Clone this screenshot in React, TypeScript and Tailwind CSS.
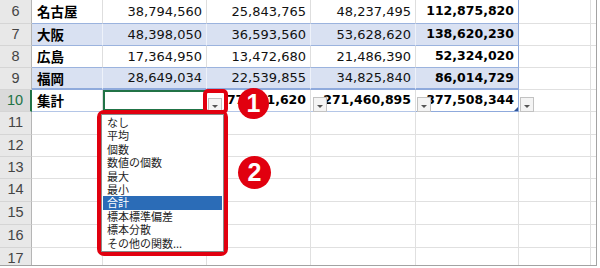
const rows = [
  { n: 6, name: '名古屋', v: ['38,794,560', '25,843,765', '48,237,495'], t: '112,875,820', band: false, h: 'h-[24px]' },
  { n: 7, name: '大阪', v: ['48,398,050', '36,593,560', '53,628,620'], t: '138,620,230', band: true, h: 'h-[22px]' },
  { n: 8, name: '広島', v: ['17,364,950', '13,472,680', '21,486,390'], t: '52,324,020', band: false, h: 'h-[22px]' },
  { n: 9, name: '福岡', v: ['28,649,034', '22,539,855', '34,825,840'], t: '86,014,729', band: true, h: 'h-[22px]' },
];

const emptyRows = [
  { n: 11, h: 'h-[23px]' },
  { n: 12, h: 'h-[22px]' },
  { n: 13, h: 'h-[22px]' },
  { n: 14, h: 'h-[23px]' },
  { n: 15, h: 'h-[23px]' },
  { n: 16, h: 'h-[23px]' },
  { n: 17, h: 'h-[22px]' },
];

const items = ['なし', '平均', '個数', '数値の個数', '最大', '最小', '合計', '標本標準偏差', '標本分散', 'その他の関数...'];

const num = "[font-family:'DejaVu_Sans',sans-serif] text-[13px] text-[#111]";
const bold = "[font-family:'DejaVu_Sans',sans-serif] text-[12.5px] font-bold text-black";
const jp = "[font-family:'Noto_Sans_CJK_JP',sans-serif]";

function RowHead({ n, active }: { n: number; active?: boolean }) {
  return (
    <div
      className={`w-[32px] shrink-0 flex items-center justify-center border-b border-b-[#d5d5d5] text-[14.5px] [font-family:'Liberation_Sans',sans-serif] ${
        active
          ? 'bg-[#dadada] text-[#217346] border-r-2 border-r-[#217346]'
          : 'bg-[#e8e8e8] text-[#444] border-r border-r-[#b5b5b5]'
      }`}
    >
      {n}
    </div>
  );
}

function DropBtn({ className }: { className: string }) {
  return (
    <div className={`absolute w-[14px] bg-[#f4f4f4] border border-[#c2c2c2] flex items-center justify-center pt-[3px] ${className}`}>
      <svg width="6" height="3" viewBox="0 0 6 3">
        <path d="M0 0h6L3 3z" fill="#555" />
      </svg>
    </div>
  );
}

export default function App() {
  return (
    <div className="w-[600px] h-[268px] bg-white overflow-hidden">
      <div className="relative w-[597px] h-[266px] border-r border-b border-[#a3a3a3] overflow-hidden">
        {rows.map((r) => {
          const bg = r.band ? 'bg-[#d9e1f2]' : 'bg-white';
          const vline = r.band ? 'border-r-[#eef2fa]' : 'border-r-[#dedede]';
          const hline = r.n === 9 ? 'border-b-2 border-b-[#8faadc]' : 'border-b border-b-[#9bb3de]';
          return (
            <div key={r.n} className={`flex ${r.h}`}>
              <RowHead n={r.n} />
              <div className={`w-[71px] shrink-0 flex items-center px-[5px] border-r ${vline} ${hline} ${bg} ${jp} text-[13.5px] font-bold text-black`}>
                {r.name}
              </div>
              <div className={`w-[104px] shrink-0 flex items-center justify-end pr-[4px] border-r ${vline} ${hline} ${bg} ${num}`}>{r.v[0]}</div>
              <div className={`w-[104px] shrink-0 flex items-center justify-end pr-[4px] border-r ${vline} ${hline} ${bg} ${num}`}>{r.v[1]}</div>
              <div className={`w-[105px] shrink-0 flex items-center justify-end pr-[4px] border-r ${vline} ${hline} ${bg} ${num}`}>{r.v[2]}</div>
              <div className={`w-[103px] shrink-0 flex items-center justify-end pr-[4px] border-r border-r-[#8faadc] ${hline} ${bg} ${bold}`}>{r.t}</div>
              <div className="w-[72px] shrink-0 border-r border-b border-[#e0e0e0]" />
              <div className="flex-1 border-b border-[#e0e0e0]" />
            </div>
          );
        })}

        {/* 集計 row */}
        <div className="flex h-[22px]">
          <RowHead n={10} active />
          <div className={`w-[71px] shrink-0 flex items-center px-[5px] border-r border-r-[#dedede] border-b border-b-[#b4c6e7] ${jp} text-[13.5px] font-bold text-black`}>
            集計
          </div>
          <div className="w-[104px] shrink-0 border-b border-b-[#b4c6e7] shadow-[inset_0_0_0_2px_#217346]" />
          <div className={`w-[104px] shrink-0 flex items-center justify-end pr-[4px] border-r border-r-[#dedede] border-b border-b-[#b4c6e7] ${bold}`}>77,941,620</div>
          <div className={`w-[105px] shrink-0 flex items-center justify-end pr-[4px] border-r border-r-[#dedede] border-b border-b-[#b4c6e7] ${bold}`}>271,460,895</div>
          <div className={`relative w-[103px] shrink-0 flex items-center justify-end pr-[4px] border-r border-r-[#8faadc] border-b border-b-[#8faadc] ${bold}`}>
            377,508,344
            <div className="absolute right-0 bottom-0 w-0 h-0 border-l-[4px] border-l-transparent border-b-[4px] border-b-[#2f5597]" />
          </div>
          <div className="w-[72px] shrink-0 border-r border-b border-[#e0e0e0]" />
          <div className="flex-1 border-b border-[#e0e0e0]" />
        </div>

        {emptyRows.map((r) => (
          <div key={r.n} className={`flex ${r.h}`}>
            <RowHead n={r.n} />
            <div className="w-[71px] shrink-0 border-r border-b border-[#e0e0e0]" />
            <div className="w-[104px] shrink-0 border-r border-b border-[#e0e0e0]" />
            <div className="w-[104px] shrink-0 border-r border-b border-[#e0e0e0]" />
            <div className="w-[105px] shrink-0 border-r border-b border-[#e0e0e0]" />
            <div className="w-[103px] shrink-0 border-r border-b border-[#e0e0e0]" />
            <div className="w-[72px] shrink-0 border-r border-b border-[#e0e0e0]" />
            <div className="flex-1 border-b border-[#e0e0e0]" />
          </div>
        ))}

        {/* dropdown buttons of the total row */}
        <DropBtn className="left-[313px] top-[97px] h-[15px]" />
        <DropBtn className="left-[417px] top-[97px] h-[15px]" />
        <DropBtn className="left-[520px] top-[97px] h-[15px]" />
        <DropBtn className="left-[208px] top-[98px] h-[14px]" />

        {/* red frame round the active button */}
        <div className="absolute left-[203px] top-[89px] w-[25px] h-[25px] border-[4px] border-[#e1000f] rounded-[5px]" />

        {/* function list */}
        <div className="absolute left-[97px] top-[110px] w-[131px] h-[146px] border-[4px] border-[#e1000f] rounded-[7px] bg-white">
          <div className="h-full border border-[#8a8a8a] bg-white p-[1px]">
            {items.map((it) => (
              <div
                key={it}
                className={`h-[13.4px] leading-[13.4px] pl-[4px] text-[11px] whitespace-nowrap ${jp} ${
                  it === '合計' ? 'bg-[#2b6cb7] text-white' : 'text-[#1e1e1e]'
                }`}
              >
                {it}
              </div>
            ))}
          </div>
        </div>

        {/* callout numbers */}
        <div className="absolute left-[238px] top-[88px] w-[31px] h-[31px] rounded-full bg-[#e1000f] flex items-center justify-center text-white text-[25px] font-bold [font-family:'Liberation_Sans',sans-serif]">
          1
        </div>
        <div className="absolute left-[238px] top-[156px] w-[33px] h-[33px] rounded-full bg-[#e1000f] flex items-center justify-center text-white text-[25px] font-bold [font-family:'Liberation_Sans',sans-serif]">
          2
        </div>
      </div>
    </div>
  );
}
